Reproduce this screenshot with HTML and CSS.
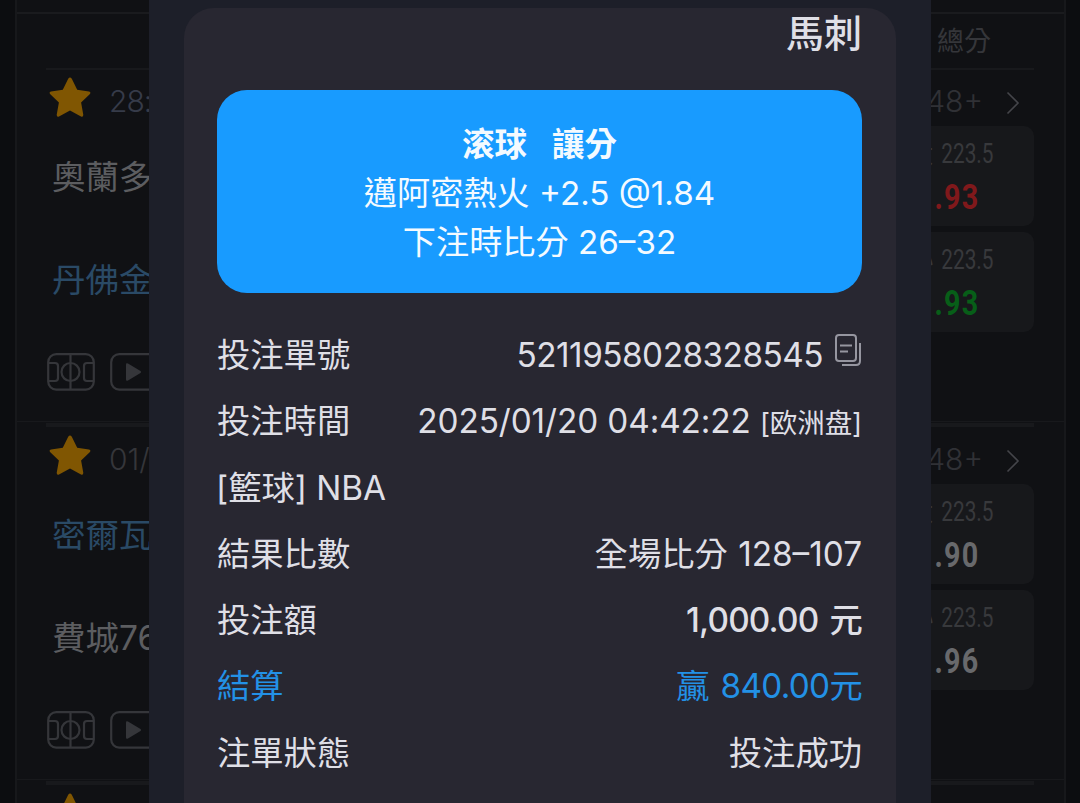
FILE: index.html
```html
<!DOCTYPE html>
<html lang="zh-Hant">
  <head>
    <meta charset="UTF-8" />
    <meta name="viewport" content="width=device-width, initial-scale=1.0" />
    <title>注單詳情</title>
    <link rel="stylesheet" href="styles.css">
  </head>
  <body>
    <svg width="0" height="0" class="sprite">
      <symbol id="star" viewBox="0 0 42 40">
        <path d="M19.2 1.8q1.8-2.6 3.6 0l5.4 11 11.8 1.7q2.4.8.7 2.8l-8.6 8.2 2.2 12.3q0 2.6-2.3 1.7L21 33.6 10 39.5q-2.3.9-2.3-1.7l2.2-12.3-8.6-8.2q-1.7-2 .7-2.8l11.8-1.7z" fill="currentColor" />
      </symbol>
      <symbol id="court" viewBox="0 0 48 38">
        <g fill="none" stroke="currentColor" stroke-width="2.2">
          <rect x="1.2" y="1.2" width="45.6" height="35.4" rx="8" />
          <circle cx="23.5" cy="19" r="9" />
          <path d="M23.5 1v36M1 10h7q3 0 3 3v12q0 3-3 3H1M47 10h-7q-3 0-3 3v12q0 3 3 3h7" />
        </g>
      </symbol>
      <symbol id="play" viewBox="0 0 48 38">
        <rect x="1.2" y="1.2" width="45.6" height="35.4" rx="8" fill="none" stroke="currentColor" stroke-width="2.2" />
        <path d="M16 11.5q0-2 2-1l12.500 7.500q1.400 1 0 2l-12.500 7.500q-2 1-2-1z" fill="currentColor" />
      </symbol>
      <symbol id="arrow" viewBox="0 0 14 24">
        <path d="M1.500 1.500L12 12 1.500 22.500" fill="none" stroke="currentColor" stroke-width="1.6" />
      </symbol>
    </svg>

    <main class="board">
      <header class="board-head"><span>總分</span></header>

      <section class="match first">
        <div class="rule"></div>
        <div class="match-title">
          <svg class="star"><use href="#star" /></svg>
          <span class="clock live">28:14</span>
          <span class="more">48+</span>
          <svg class="arrow"><use href="#arrow" /></svg>
        </div>
        <div class="match-body">
          <div class="teams">
            <p>奧蘭多</p>
            <p class="fav">丹佛金塊</p>
            <div class="icons">
              <svg><use href="#court" /></svg>
              <svg><use href="#play" /></svg>
            </div>
          </div>
          <div class="odds">
            <div class="odd"><span class="line">大 223.5</span><b class="up">1.93</b></div>
            <div class="odd"><span class="line">小 223.5</span><b class="down">1.93</b></div>
          </div>
        </div>
      </section>

      <section class="match">
        <div class="rule"></div>
        <div class="match-title">
          <svg class="star"><use href="#star" /></svg>
          <span class="clock">01/21</span>
          <span class="more">48+</span>
          <svg class="arrow"><use href="#arrow" /></svg>
        </div>
        <div class="match-body">
          <div class="teams">
            <p class="fav">密爾瓦基</p>
            <p>費城76人</p>
            <div class="icons">
              <svg><use href="#court" /></svg>
              <svg><use href="#play" /></svg>
            </div>
          </div>
          <div class="odds">
            <div class="odd"><span class="line">大 223.5</span><b>1.90</b></div>
            <div class="odd"><span class="line">小 223.5</span><b>1.96</b></div>
          </div>
        </div>
      </section>

      <section class="match">
        <div class="rule"></div>
        <div class="match-title">
          <svg class="star"><use href="#star" /></svg>
        </div>
      </section>
    </main>

    <!-- 注單彈窗 -->
    <div class="modal">
      <div class="ticket">
        <h2>馬刺</h2>
        <div class="bet">
          <h3><span>滚球</span><span>讓分</span></h3>
          <p>邁阿密熱火 +2.5 @1.84</p>
          <p>下注時比分 26–32</p>
        </div>
        <ul class="info">
          <li>
            <span>投注單號</span>
            <span class="number">5211958028328545
              <svg class="copy" viewBox="0 0 27 33" fill="none" stroke="currentColor" stroke-width="2">
                <rect x="1" y="1" width="20" height="26" rx="3" />
                <path d="M25 9v18q0 4-4 4H7M5 11.500h12M5 17.500h8" />
              </svg>
            </span>
          </li>
          <li><span>投注時間</span><span class="time">2025/01/20 04:42:22 <small>[欧洲盘]</small></span></li>
          <li><span class="league">[籃球] NBA</span></li>
          <li><span>結果比數</span><span class="score">全場比分 128–107</span></li>
          <li><span>投注額</span><span class="amount">1,000.00 元</span></li>
          <li class="win"><span>結算</span><span class="payout">贏 840.00元</span></li>
          <li><span>注單狀態</span><span>投注成功</span></li>
        </ul>
      </div>
    </div>
  </body>
</html>
```
FILE: styles.css
```css
* {
  margin: 0;
  padding: 0;
  box-sizing: border-box;
}

body {
  height: 803px;
  overflow: hidden;
  font-family: Inter, "Noto Sans CJK TC", sans-serif;
  background-color: #0c0d10;
  color: #dfdfe6;
}

.sprite {
  position: absolute;
}

.board {
  height: 803px;
  margin: 0 14px 0 15px;
  overflow: hidden;
  border-left: 2px solid #17181b;
  border-right: 2px solid #17181b;
  background-color: #101114;
}

.board-head {
  height: 53px;
  margin-top: 12px;
  padding: 9px 73px 0 0;
  border-top: 2px solid #1a1b1e;
  color: #35363a;
  font-size: 27px;
  line-height: 38px;
  text-align: right;
}

.match {
  height: 357px;
  margin-bottom: 1px;
  padding: 0 30px 0 29px;
  border-bottom: 1px solid #18191c;
}

.match.first {
  padding-top: 3px;
}

.rule {
  height: 4px;
  background-color: #18191c;
}

.first .rule {
  height: 2px;
  margin-bottom: -1px;
}

.match-title {
  display: flex;
  align-items: center;
  height: 57px;
  padding: 6px 14px 0 3px;
  color: #303136;
  font-size: 30px;
  font-weight: 350;
}

.star {
  width: 42px;
  height: 40px;
  margin-top: -8px;
  color: #805602;
}

.clock {
  margin-left: 18px;
  color: #35363a;
}

.clock.live {
  color: #363b49;
  letter-spacing: -1px;
}

.more {
  margin-left: auto;
}

.arrow {
  width: 14px;
  height: 24px;
  margin: 4px 0 0 23px;
  color: #44454a;
}

.match-body {
  display: flex;
  justify-content: space-between;
}

.teams p {
  height: 103px;
  padding-left: 6px;
  color: #5c5d60;
  font-size: 33.500px;
  line-height: 102px;
}

.teams .fav {
  color: #2a4a66;
}

.icons {
  display: flex;
  gap: 15px;
  padding: 21px 0 0 1px;
  color: #35363a;
}

.icons svg {
  width: 48px;
  height: 38px;
}

.odds {
  display: flex;
  flex-direction: column;
  gap: 6px;
}

.odd {
  display: flex;
  flex-direction: column;
  align-items: flex-end;
  width: 180px;
  height: 100px;
  padding: 9px 40px 0 0;
  border-radius: 10px;
  background-color: #17181b;
  font-family: Roboto, "Noto Sans CJK TC", sans-serif;
}

.line {
  color: #38393c;
  font-size: 27px;
  line-height: 38px;
  word-spacing: 4px;
  transform: scaleX(0.77);
  transform-origin: right;
}

.odd b {
  margin-right: 15px;
  color: #68696c;
  font-size: 35px;
  line-height: 50px;
  letter-spacing: 1.500px;
  transform: scaleX(0.82);
  transform-origin: right;
}

.odd .up {
  color: #80181b;
}

.odd .down {
  color: #075e18;
}

.modal {
  position: fixed;
  top: 0;
  left: 149px;
  width: 782px;
  height: 803px;
  padding: 8px 35px 0;
  overflow: hidden;
  background-color: #1d1f29;
}

.ticket {
  height: 840px;
  padding: 0 34px 0 33px;
  border-radius: 30px;
  background-color: #282731;
}

.ticket h2 {
  height: 82px;
  font-size: 38px;
  font-weight: 500;
  line-height: 50px;
  text-align: right;
}

.bet {
  height: 203px;
  padding-top: 30px;
  border-radius: 30px;
  background-color: #189bff;
  color: #f4faff;
  font-size: 33.200px;
  line-height: 49px;
  text-align: center;
}

.bet h3 {
  display: flex;
  justify-content: center;
  gap: 25px;
  font-size: 32.500px;
  font-weight: 700;
}

.bet p {
  font-weight: 400;
}

.info {
  padding-top: 29px;
  list-style: none;
}

.info li {
  display: flex;
  justify-content: space-between;
  height: 66.300px;
  font-size: 33.300px;
  line-height: 67px;
  white-space: nowrap;
}

.number {
  display: flex;
  gap: 12px;
  letter-spacing: -0.5px;
}

.copy {
  width: 27px;
  height: 33px;
  margin-top: 12px;
  color: #9696a0;
}

.time {
  letter-spacing: -0.1px;
}

.time small {
  font-size: 27.500px;
}

.league {
  margin-left: -1px;
}

.score {
  word-spacing: 1px;
}

.amount {
  font-weight: 500;
  letter-spacing: -0.8px;
  word-spacing: 3px;
}

.payout {
  letter-spacing: -0.7px;
  word-spacing: 3px;
}

.info .win {
  color: #2391e6;
}
```
